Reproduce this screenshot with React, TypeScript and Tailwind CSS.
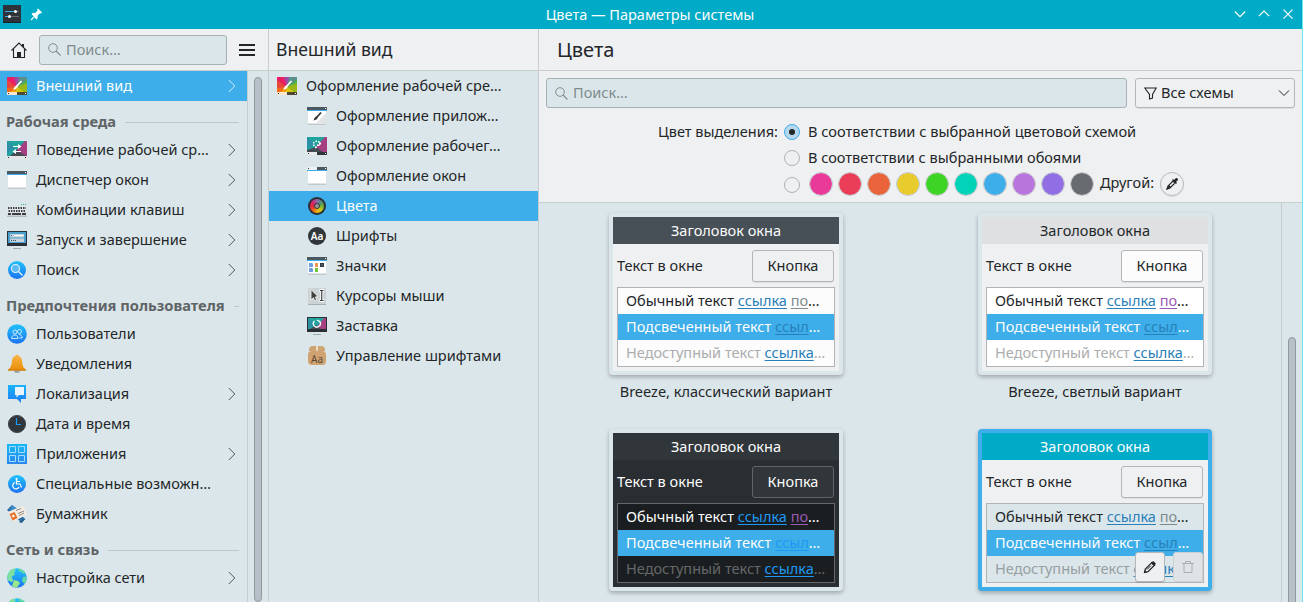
import React from "react";

type IconProps = { className?: string };

const Svg = ({ w = 20, h = 20, children }: { w?: number; h?: number; children: React.ReactNode }) => (
  <svg width={w} height={h} viewBox={`0 0 ${w} ${h}`} fill="none" className="block shrink-0">
    {children}
  </svg>
);

const Wheel = () => (
  <Svg>
    <path d="M0 1h20v18H0z" fill="#e8453c" />
    <path d="M10 11L0 4V1h8z" fill="#e91e63" />
    <path d="M10 11L7 1h6z" fill="#a04aa8" />
    <path d="M10 11L12 1h8v4z" fill="#5b8f8e" />
    <path d="M10 11L20 3v6z" fill="#4caf50" />
    <path d="M10 11l10-4v9H10z" fill="#9ab81a" />
    <path d="M10 11l7 5H8z" fill="#d9c60a" />
    <path d="M10 11l-2 5H2z" fill="#f5a00c" />
    <path d="M10 11l-7 5H0v-4z" fill="#f4681c" />
    <path d="M0 16h10v3H0z" fill="#fbe6cf" />
    <path d="M10 16h10v3H10z" fill="#4d4a33" />
    <path d="M1 17h1v1H1z" fill="#222" />
    <path d="M18 17h1v1h-1z" fill="#fff" />
    <path d="M14.500 5l-4.500 5" stroke="#fff" strokeWidth="1.800" />
    <path d="M9.500 9l1.500 1.500-2 2.500-3 .5 1.500-2.500z" fill="#fff" />
  </Svg>
);

const Behaviour = () => (
  <Svg>
    <path d="M0 1h20v18H0z" fill="#a53f82" />
    <path d="M0 1h18L4 16H0z" fill="#20a39c" />
    <path d="M0 1l8 7-8 5z" fill="#2b8fa6" />
    <path d="M10 10l9 6H3z" fill="#454b53" />
    <path d="M0 16h20v3H0z" fill="#e4e6e7" />
    <path d="M1 17h1v1H1zM18 17h1v1h-1z" fill="#222" />
    <path d="M6 6.500h5M9 11.500h5" stroke="#fff" strokeWidth="1.200" />
    <path d="M11 4l3.500 2.500L11 9zM9 9l-3.500 2.500L9 14z" fill="#fff" />
  </Svg>
);

const WindowIcon = ({ children, light }: { children?: React.ReactNode; light?: boolean }) => (
  <Svg>
    <path d="M1 4h18v14.500H1z" fill="#fff" />
    <path d="M1 17.500h18V19H1z" fill="#c3c8cb" />
    <path d="M0 1h20v3H0z" fill="#4b5861" />
    {light && <path d="M0 1h10v3H0z" fill="#eef0f1" />}
    {light && <path d="M1 2h1v1H1z" fill="#31363b" />}
    <path d="M0 4h20v1H0z" fill="#3daee9" />
    <path d="M18 2h1v1h-1z" fill="#fff" />
    {children}
  </Svg>
);

const Keyboard = () => (
  <Svg>
    <path d="M0 6h20v10H0z" fill="#e2e5e6" />
    <path d="M0 15.500h20V17H0z" fill="#b4bbbe" />
    <path d="M1 8h18M1.500 11h17" stroke="#3a4247" strokeWidth="2" strokeDasharray="1.500 1" />
    <path d="M1 14h3M5 14h9M15 14h4" stroke="#3a4247" strokeWidth="1.800" />
    <path d="M14 4.500h1M16 4.500h1M18 4.500h1" stroke="#2fb67c" />
  </Svg>
);

const Monitor = () => (
  <Svg>
    <path d="M0 1h20v15H0z" fill="#2b3036" />
    <path d="M1 2h18v11H1z" fill="#4aa0cd" />
    <path d="M3 4h14v3.500H3zM3 8.500h14V12H3z" fill="#c9d3da" />
    <path d="M7 5.500h9" stroke="#fff" />
    <path d="M4 5.500h1M4 10.500h1M6 10.500h1M8 10.500h1" stroke="#34495a" />
    <path d="M6 18.500h8" stroke="#a2aaae" />
  </Svg>
);

const Disc = ({ r = 9, children }: { r?: number; children: React.ReactNode }) => (
  <Svg>
    <defs>
      <linearGradient id="discBlue" x1="0" y1="0" x2="0" y2="1">
        <stop stopColor="#1fc2fb" />
        <stop offset="1" stopColor="#1d74f1" />
      </linearGradient>
    </defs>
    <circle cx="10" cy="10" r={r} fill="url(#discBlue)" />
    {children}
  </Svg>
);

const SearchDisc = () => (
  <Disc>
    <circle cx="8.500" cy="8.500" r="4" stroke="#e5f4fd" strokeWidth="1.100" fill="#5bb9f6" />
    <path d="M11.500 11.500l4 4" stroke="#e5f4fd" strokeWidth="1.300" />
  </Disc>
);

const Users = () => (
  <Disc r={9.8}>
    <g stroke="#d9eefc" strokeWidth=".9">
      <circle cx="8" cy="8" r="2" />
      <circle cx="12.500" cy="7.500" r="2" />
      <path d="M4.500 14.500c.3-2.500 1.500-3.500 3.500-3.500s2.800 1.200 3 3.500zM12 10.500c2 0 3 1.300 3.200 3.500h-3" />
    </g>
  </Disc>
);

const Bell = () => (
  <Svg>
    <defs>
      <linearGradient id="bellGold" x1="0" y1="0" x2="0" y2="1">
        <stop stopColor="#f9b54a" />
        <stop offset="1" stopColor="#ea8d05" />
      </linearGradient>
    </defs>
    <path d="M7 16.500h6a3 2.500 0 0 1-6 0z" fill="#9aa1a5" />
    <path d="M9 1.500a1 1 0 0 1 2 0C14 2.500 15 5 15.200 8c.2 3.500.8 5.500 3.600 7.500v1H1.200v-1C4 13.500 4.600 11.500 4.800 8 5 5 6 2.500 9 1.500z" fill="url(#bellGold)" />
    <path d="M1 15.500h18v1H1z" fill="#c67a0d" />
  </Svg>
);

const Locale = () => (
  <Svg>
    <defs>
      <linearGradient id="localeBlue" x1="0" y1="0" x2="0" y2="1">
        <stop stopColor="#1ab4fa" />
        <stop offset="1" stopColor="#1f7cf3" />
      </linearGradient>
    </defs>
    <path d="M1 1h18v14h-5v4l-4-4H1z" fill="url(#localeBlue)" />
    <path d="M8 3h9v8h-5l-2.500 2.500V11H8z" fill="#e8f5fe" />
  </Svg>
);

const Clock = () => (
  <Svg>
    <circle cx="10" cy="10" r="8.600" fill="#31363b" stroke="#45494d" />
    <path d="M9.500 4v6.500H14" stroke="#1d99f3" strokeWidth="1.200" />
  </Svg>
);

const Apps = () => (
  <Svg>
    <defs>
      <linearGradient id="appsBlue" x1="0" y1="0" x2="0" y2="1">
        <stop stopColor="#16b9f8" />
        <stop offset="1" stopColor="#2b86ec" />
      </linearGradient>
    </defs>
    <path d="M0 0h20v20H0z" fill="url(#appsBlue)" />
    <path d="M2.500 2.500h6v6h-6zM11.500 2.500h6v6h-6zM2.500 11.500h6v6h-6zM11.500 11.500h6v6h-6z" stroke="#a5dcfc" />
  </Svg>
);

const Access = () => (
  <Disc>
    <g stroke="#fff" strokeWidth="1.200">
      <path d="M9.500 5v5h3.500l1.500 3.500M9.500 7.500H13" />
      <path d="M8 8.500a3.300 3.300 0 1 0 4 4.500" />
    </g>
    <circle cx="9.500" cy="4.800" r="1" fill="#fff" />
  </Disc>
);

const Wallet = () => (
  <Svg>
    <path d="M5 1l13 14-3 4L0 6z" fill="#2c6ca5" />
    <path d="M5 1l6 4-9 4z" fill="#3e8ac6" />
    <path d="M1 8L16 1.500l4 9-14 7.500z" fill="#f1ece3" />
    <path d="M2.500 10l5-2 3 6-5 2.500z" fill="#e8732b" />
    <circle cx="6.300" cy="12" r="1.200" fill="#fff" />
    <path d="M9 6.500l5-2M11 9.500l6-2.500M12 11.500l5-2.500" stroke="#77716c" strokeWidth=".8" />
    <path d="M14 19l5-4.500-4 1.500-3 2z" fill="#2a5c8c" />
  </Svg>
);

const Globe = () => (
  <Disc r={9.8}>
    <path d="M1 6C2 3 4 1 6.500.8L9 2 7 4.500 8 6.500 4.500 9 6.500 12.500 4.500 14 1 12.500C0 10 0 8 1 6z" fill="#7ee0a0" />
    <path d="M12 .5c3 .5 5.500 2.500 6.500 5L16 5.500 14.500 4 11.500 3zM16 9l3.500-.5c.3 3-.5 5.500-2 7.500l-2.500-3z" fill="#63d9a6" />
    <path d="M7 12l4 1 2 2-3 4.500C8 19.500 6 18.500 5 18l1-3z" fill="#9be888" />
  </Disc>
);

const AppStyle = () => (
  <WindowIcon>
    <path d="M9 17.500L19 7v10.500z" fill="#e2e5e6" />
    <path d="M14 6.500l-4 4.500" stroke="#31363b" strokeWidth="1.800" />
    <path d="M9.500 10l1.500 1.500-1.500 2-3 1 1-2.500z" fill="#31363b" />
  </WindowIcon>
);

const PlasmaStyle = () => (
  <Svg>
    <path d="M0 1h20v18H0z" fill="#a53f82" />
    <path d="M0 1h18L4 16H0z" fill="#20a39c" />
    <path d="M0 1l8 7-8 5z" fill="#2b8fa6" />
    <path d="M9 11l7 5H0v-2z" fill="#454b53" />
    <path d="M0 16h10v3H0z" fill="#e9ebec" />
    <path d="M10 16h10v3H10z" fill="#31363b" />
    <path d="M1 17h1v1H1z" fill="#222" />
    <path d="M18 17h1v1h-1z" fill="#fff" />
    <path d="M6 6h1.500v1.500H6zM8.500 4.500H10V6H8.500zM6 8.500h1.500V10H6zM8 10.500h1.800v1.800H8z" fill="#fff" />
    <path d="M11 5h1.500v1.500H14v2h-1.500V10H10V8.500h2v-2h-1z" fill="#fff" />
  </Svg>
);

const ColorsIcon = () => (
  <span className="relative block size-5 shrink-0">
    <span className="absolute inset-px rounded-full bg-[#2b3036]" />
    <span className="absolute inset-[3px] rounded-full bg-[conic-gradient(#8a6aa5,#4f8e84,#6fb032,#c8c81c,#eeb10a,#ee5a1e,#e8243f,#d22774,#8a6aa5)]" />
    <span className="absolute top-[7px] left-[7px] size-1.5 rounded-full border-[1.5px] border-[#2b3036] bg-[#999]" />
  </span>
);

const Fonts = () => (
  <span className="flex size-5 shrink-0 items-center justify-center">
    <span className="flex size-[18px] items-center justify-center rounded-full bg-[#31363b] pb-px text-[10px] leading-none font-semibold text-white">
      Aa
    </span>
  </span>
);

const IconsIcon = () => (
  <WindowIcon>
    <path d="M2 7h3l1 1v3H2zM2 12h3l1 1v3H2z" fill="#6fa0dc" />
    <path d="M8 7h3v4H8z" fill="#f39350" />
    <path d="M8 12h3v4H8z" fill="#72c437" />
    <path d="M13 7h4v4h-4z" fill="#31363b" />
    <path d="M14.500 8.500h1v1h-1z" fill="#a9c6e8" />
  </WindowIcon>
);

const Cursors = () => (
  <Svg>
    <rect x="1" y="2" width="18" height="17" rx="1" fill="#cdd2d4" />
    <path d="M1 18h18v1H1z" fill="#a9b0b3" />
    <path d="M4 3.500l7 7-2.500.500 1 3-2 .8-1-3L4 14z" fill="#43423e" stroke="#fff" strokeWidth=".8" />
    <path d="M12.500 4.500h4.500M14.750 4.500v10M12.500 14.500h4.500" stroke="#fff" strokeWidth="2.800" />
    <path d="M13 4.500h3.500M14.750 4.500v10M13 14.500h3.500" stroke="#31363b" strokeWidth="1.100" />
  </Svg>
);

const Saver = () => (
  <Svg>
    <path d="M0 1h20v15H0z" fill="#2b3036" />
    <path d="M1 2h18v11H1z" fill="#a53f82" />
    <path d="M1 2h16L8 13H1z" fill="#22a49e" />
    <path d="M1 2l7 6-7 5z" fill="#2b8fa6" />
    <path d="M9 9l5 4H3z" fill="#444d56" />
    <path d="M7.500 5a3.500 3.500 0 1 0 5.200.5L10 4" stroke="#fff" strokeWidth="1.300" />
    <path d="M6 18.500h8" stroke="#a2aaae" />
  </Svg>
);

const FontBox = () => (
  <span className="flex h-5 w-5 shrink-0 flex-col items-center">
    <span className="h-[5px] w-4 rounded-t-sm bg-[linear-gradient(90deg,#cda472_42%,#ecd9bf_42%,#ecd9bf_58%,#cda472_58%)]" />
    <span className="flex h-[14px] w-[18px] items-end justify-center rounded-sm bg-[#d0a272] text-[10px] leading-[12px] text-[#5a4936]">
      Aa
    </span>
  </span>
);

type Item = { label: string; icon: () => React.ReactElement; more?: boolean; active?: boolean };

const groups: { title?: string; items: Item[] }[] = [
  { items: [{ label: "Внешний вид", icon: Wheel, more: true, active: true }] },
  {
    title: "Рабочая среда",
    items: [
      { label: "Поведение рабочей ср…", icon: Behaviour, more: true },
      { label: "Диспетчер окон", icon: () => <WindowIcon />, more: true },
      { label: "Комбинации клавиш", icon: Keyboard, more: true },
      { label: "Запуск и завершение", icon: Monitor, more: true },
      { label: "Поиск", icon: SearchDisc, more: true },
    ],
  },
  {
    title: "Предпочтения пользователя",
    items: [
      { label: "Пользователи", icon: Users },
      { label: "Уведомления", icon: Bell },
      { label: "Локализация", icon: Locale, more: true },
      { label: "Дата и время", icon: Clock },
      { label: "Приложения", icon: Apps, more: true },
      { label: "Специальные возможн…", icon: Access },
      { label: "Бумажник", icon: Wallet },
    ],
  },
  {
    title: "Сеть и связь",
    items: [
      { label: "Настройка сети", icon: Globe, more: true },
      { label: "", icon: Globe },
    ],
  },
];

const pages: Item[] = [
  { label: "Оформление прилож…", icon: AppStyle },
  { label: "Оформление рабочег…", icon: PlasmaStyle },
  { label: "Оформление окон", icon: () => <WindowIcon light /> },
  { label: "Цвета", icon: ColorsIcon, active: true },
  { label: "Шрифты", icon: Fonts },
  { label: "Значки", icon: IconsIcon },
  { label: "Курсоры мыши", icon: Cursors },
  { label: "Заставка", icon: Saver },
  { label: "Управление шрифтами", icon: FontBox },
];

const swatches = [
  "bg-[#e93a9a]",
  "bg-[#e93d58]",
  "bg-[#e9643a]",
  "bg-[#e8cb2d]",
  "bg-[#3dd425]",
  "bg-[#00d3b8]",
  "bg-[#3daee9]",
  "bg-[#b875dc]",
  "bg-[#926ee4]",
  "bg-[#686b6f]",
];

type Scheme = {
  name?: string;
  frame: string;
  title: string;
  body: string;
  button: string;
  list: string;
  disabled: string;
  link: string;
  visited: string;
  selLink: string;
  editable?: boolean;
};

const schemes: Scheme[] = [
  {
    name: "Breeze, классический вариант",
    frame: "bg-[#dbe6ea]",
    title: "bg-[#475057] text-[#fcfcfc]",
    body: "bg-[#eff0f1] text-[#232629]",
    button: "bg-[#eff0f1] border-[#b4b7b9]",
    list: "bg-[#fcfcfc] border-[#b1b4b6]",
    disabled: "text-[#abadae]",
    link: "text-[#2980b9]",
    visited: "text-[#7f8c8d]",
    selLink: "text-[#2980b9]",
  },
  {
    name: "Breeze, светлый вариант",
    frame: "bg-[#dbe6ea]",
    title: "bg-[#dee0e2] text-[#232629]",
    body: "bg-[#eff0f1] text-[#232629]",
    button: "bg-[#fcfcfc] border-[#b4b7b9]",
    list: "bg-[#fff] border-[#b1b4b6]",
    disabled: "text-[#abadae]",
    link: "text-[#2980b9]",
    visited: "text-[#9b59b6]",
    selLink: "text-[#2980b9]",
  },
  {
    frame: "bg-[#dbe6ea]",
    title: "bg-[#31363b] text-[#fcfcfc]",
    body: "bg-[#2a2e32] text-[#fcfcfc]",
    button: "bg-[#31363b] border-[#616569]",
    list: "bg-[#1b1e20] border-[#65686a]",
    disabled: "text-[#65686a]",
    link: "text-[#1d99f3]",
    visited: "text-[#9b59b6]",
    selLink: "text-[#1d99f3]",
  },
  {
    frame: "bg-[#3daee9]",
    title: "bg-[#00abc7] text-[#fcfcfc]",
    body: "bg-[#eff0f1] text-[#232629]",
    button: "bg-[#eff0f1] border-[#b4b7b9]",
    list: "bg-[#dbe6ea] border-[#b1b4b6]",
    disabled: "text-[#979ea1]",
    link: "text-[#2980b9]",
    visited: "text-[#7f8c8d]",
    selLink: "text-[#2980b9]",
    editable: true,
  },
];

const Chevron = ({ className = "" }: IconProps) => (
  <svg width="8" height="14" viewBox="0 0 8 14" fill="none" className={`shrink-0 ${className}`}>
    <path d="M.8 1l6 6-6 6" stroke="currentColor" />
  </svg>
);

const SearchField = ({ className = "" }: IconProps) => (
  <div className={`flex h-[30px] items-center gap-[5px] rounded-[3px] border border-[#a6b1b4] bg-[#dbe6ea] pl-2 text-[#7f8c8d] ${className}`}>
    <svg width="13" height="13" viewBox="0 0 13 13" fill="none" className="shrink-0">
      <circle cx="5" cy="5" r="4.300" stroke="currentColor" />
      <path d="M8 8l4.500 4.500" stroke="currentColor" strokeWidth="1.100" />
    </svg>
    <span className="pb-0.5">Поиск…</span>
  </div>
);

const SidebarRow = ({ item }: { item: Item }) => {
  const Icon = item.icon;
  return (
    <div className={`flex h-[30px] shrink-0 items-center pr-[11px] pl-[7px] ${item.active ? "bg-[#3daee9] text-[#fcfcfc]" : ""}`}>
      <Icon />
      <span className="ml-[9px] flex-1 pb-0.5 whitespace-nowrap">{item.label}</span>
      {item.more && <Chevron className={item.active ? "text-[#d5edf9]" : "text-[#50565a]"} />}
    </div>
  );
};

const Radio = ({ checked }: { checked?: boolean }) => (
  <span
    className={`flex size-4 shrink-0 items-center justify-center rounded-full border ${
      checked ? "border-[#3daee9] bg-[#b5d9ec]" : "border-[#b0b3b5] bg-[#eff0f1]"
    }`}
  >
    {checked && <span className="size-1.5 rounded-full bg-[#232629]" />}
  </span>
);

const Link = ({ color, children }: { color: string; children: React.ReactNode }) => (
  <span className={`underline decoration-1 underline-offset-2 ${color}`}>{children}</span>
);

const SchemeCard = ({ s }: { s: Scheme }) => (
  <div className="flex h-[216px] w-[234px] flex-col items-center">
    <div className={`relative h-[162px] w-full rounded-[4px] p-1 shadow-[0_2px_4px_rgba(0,0,0,0.28)] ${s.frame}`}>
      <div className={`flex h-[154px] flex-col ${s.body}`}>
        <div className={`flex h-[27px] items-center justify-center pb-0.5 ${s.title}`}>Заголовок окна</div>
        <div className="flex h-11 items-center justify-between pr-[5px] pl-1">
          <span className="pb-0.5">Текст в окне</span>
          <span className={`flex h-8 w-[82px] items-center justify-center rounded-[3px] border pb-0.5 shadow-[0_1px_0_rgba(0,0,0,0.08)] ${s.button}`}>
            Кнопка
          </span>
        </div>
        <div className={`mx-1 -mt-px h-20 border whitespace-nowrap ${s.list}`}>
          <div className="h-[26px] pl-2 leading-6">
            Обычный текст <Link color={s.link}>ссылка</Link> <Link color={s.visited}>по</Link>…
          </div>
          <div className="h-[26px] bg-[#3daee9] pl-2 leading-6 text-[#fcfcfc]">
            Подсвеченный текст <Link color={s.selLink}>ссыл</Link>…
          </div>
          <div className={`h-[26px] pl-2 leading-6 ${s.disabled}`}>
            Недоступный текст <Link color={s.link}>ссылка</Link>…
          </div>
        </div>
      </div>
      {s.editable && (
        <div className="absolute right-[9px] bottom-[9px] flex gap-2">
          <span className="flex h-[30px] w-[30px] items-center justify-center rounded-[3px] border border-[#b4b7b9] bg-[#eff0f1] shadow-[0_1px_0_rgba(0,0,0,0.12)]">
            <svg width="14" height="14" viewBox="0 0 14 14" fill="none">
              <path d="M1.500 12.500l.8-3.500L9 2.300 11.700 5 5 11.700z" stroke="#232629" strokeWidth="1.200" />
              <path d="M8 3.300L10.300 1 13 3.700 10.700 6z" fill="#232629" />
              <path d="M4 9.500l4-4" stroke="#232629" />
              <path d="M1 13l.8-3 2.200 2.200z" fill="#232629" />
            </svg>
          </span>
          <span className="flex h-[30px] w-[30px] items-center justify-center rounded-[3px] border border-[#cdd1d4] bg-[#dfe3e5]">
            <svg width="12" height="14" viewBox="0 0 12 14" fill="none">
              <path d="M0 3.500h12M3.500 3V1.500h5V3M2 4v8.500h8V4" stroke="#abafb1" />
            </svg>
          </span>
        </div>
      )}
    </div>
    {s.name && <div className="mt-1.5 leading-5 whitespace-nowrap">{s.name}</div>}
  </div>
);

const TitleBar = () => (
  <header className="relative flex h-[29px] shrink-0 items-center justify-center bg-[#00abc7] text-[#fcfcfc]">
    <div className="absolute top-[5px] left-[3px] flex items-center gap-2">
      <svg width="18" height="18" viewBox="0 0 18 18">
        <path d="M0 0h18v18H0z" fill="#2d3338" />
        <path d="M0 17h18v1H0z" fill="#1c2023" />
        <path d="M2 6.500h10M2 11.500h3" stroke="#3daee9" />
        <path d="M13 6.500h3M7 11.500h9" stroke="#626970" />
        <circle cx="12.500" cy="6.500" r="1.500" fill="#fff" />
        <circle cx="6.500" cy="11.500" r="1.500" fill="#fff" />
      </svg>
      <svg width="13" height="13" viewBox="0 0 13 13" className="ml-px">
        <path d="M8 .5L12 4.500 11 5.500 10 5.200 7.700 7.500 7.500 10.500 6.500 11.500 1.500 6 2.500 5 5.500 4.800 7.500 2.500 7.200 1.300z" fill="#fff" />
        <path d="M4 9L1 12" stroke="#fff" strokeWidth="1.100" />
      </svg>
    </div>
    <span className="pr-0.5 pb-0.5">Цвета — Параметры системы</span>
    <div className="absolute top-2 right-2 flex gap-3">
      <svg width="12" height="12" viewBox="0 0 12 12" fill="none" stroke="#fff" strokeWidth="1.100">
        <path d="M.8 3.500L6 8.700l5.200-5.200" />
      </svg>
      <svg width="12" height="12" viewBox="0 0 12 12" fill="none" stroke="#fff" strokeWidth="1.100">
        <path d="M.8 8.200L6 3l5.200 5.200" />
      </svg>
      <svg width="12" height="12" viewBox="0 0 12 12" fill="none" stroke="#fff" strokeWidth="1.100">
        <path d="M1.500 1.700l9 9M10.500 1.700l-9 9" />
      </svg>
    </div>
  </header>
);

export default function App() {
  return (
    <div className="flex h-[602px] w-[1303px] flex-col overflow-hidden border-r border-[#68e5f5] bg-[#eff0f1] font-['Noto_Sans',sans-serif] text-[14.53px] leading-5 text-[#232629]">
      <TitleBar />
      <div className="flex min-h-0 flex-1">
        <aside className="flex w-[269px] shrink-0 flex-col border-r border-[#c8cdd0]">
          <div className="flex h-[42px] shrink-0 items-center border-b border-[#c8cdd0] pl-[11px]">
            <svg width="16" height="16" viewBox="0 0 16 16" fill="none" className="mr-3 shrink-0">
              <path d="M.5 8.500L8 1l7.500 7.500M2.500 7v8.500h11V7" stroke="#232629" strokeWidth="1.100" />
              <path d="M11 2h2v4l-2-2zM6 10h4v6H6z" fill="#232629" />
            </svg>
            <SearchField className="w-[188px]" />
            <div className="ml-3 flex w-4 flex-col gap-[3px]">
              <span className="h-0.5 bg-[#232629]" />
              <span className="h-0.5 bg-[#232629]" />
              <span className="h-0.5 bg-[#232629]" />
            </div>
          </div>
          <div className="flex min-h-0 flex-1 bg-[#dbe6ea]">
            <nav className="flex w-[248px] flex-col overflow-hidden border-r border-[#c5cdd0]">
              {groups.map((g, i) => (
                <React.Fragment key={i}>
                  {g.title && (
                    <div className="flex h-[34px] shrink-0 items-center gap-[9px] pt-2 pr-2 pl-1.5 text-[14.7px] font-bold whitespace-nowrap text-[#5f6467]">
                      <span className="pb-0.5">{g.title}</span>
                      <span className="h-px flex-1 bg-[#bcc6cb]" />
                    </div>
                  )}
                  {g.items.map((it, j) => (
                    <SidebarRow key={j} item={it} />
                  ))}
                </React.Fragment>
              ))}
            </nav>
            <div className="mt-1.5 ml-1.5 h-[525px] w-2 rounded-full border border-[#8f999e] bg-[#b7c0c8]" />
          </div>
        </aside>

        <section className="flex w-[270px] shrink-0 flex-col border-r border-[#c8cdd0]">
          <h2 className="flex h-[42px] shrink-0 items-center border-b border-[#c8cdd0] pb-0.5 pl-[7px] text-[17.6px]">Внешний вид</h2>
          <div className="flex-1 bg-[#dbe6ea]">
            <div className="flex h-[30px] items-center gap-[9px] pl-2 whitespace-nowrap">
              <Wheel />
              <span className="pb-0.5">Оформление рабочей сре…</span>
            </div>
            {pages.map((p) => {
              const Icon = p.icon;
              return (
                <div
                  key={p.label}
                  className={`flex h-[30px] items-center pl-[38px] whitespace-nowrap ${p.active ? "bg-[#3daee9] text-[#fcfcfc]" : ""}`}
                >
                  <Icon />
                  <span className="ml-[9px] pb-0.5">{p.label}</span>
                </div>
              );
            })}
          </div>
        </section>

        <main className="flex min-w-0 flex-1 flex-col">
          <h1 className="flex h-[42px] shrink-0 items-center border-b border-[#c8cdd0] pl-[18px] text-[20px]">Цвета</h1>
          <div className="flex h-[132px] shrink-0 flex-col border-b border-[#c8cdd0] px-[7px] pt-[7px]">
            <div className="flex gap-2">
              <SearchField className="w-[581px]" />
              <div className="flex h-[30px] w-[160px] items-center rounded-[3px] border border-[#b4b7b9] pr-1 pl-2 shadow-[0_1px_0_rgba(0,0,0,0.08)]">
                <svg width="13" height="13" viewBox="0 0 13 13" fill="none" className="mr-1">
                  <path d="M.8 1h11.400L8.500 7.500v3.500l-3 1V7.500z" stroke="#232629" strokeWidth="1.100" />
                </svg>
                <span className="flex-1 pb-0.5">Все схемы</span>
                <svg width="12" height="8" viewBox="0 0 12 8" fill="none">
                  <path d="M1 1.500l5 5 5-5" stroke="#232629" />
                </svg>
              </div>
            </div>
            <div className="mt-[11px] flex h-[26px] items-center">
              <span className="w-[232px] pb-0.5 text-right">Цвет выделения:</span>
              <span className="ml-1.5 flex items-center gap-2 whitespace-nowrap">
                <Radio checked />
                <span className="pb-0.5 text-[14.6px]">В соответствии с выбранной цветовой схемой</span>
              </span>
            </div>
            <div className="flex h-[26px] items-center gap-2 pl-[238px] whitespace-nowrap">
              <Radio />
              <span className="pb-0.5">В соответствии с выбранными обоями</span>
            </div>
            <div className="flex h-[27px] items-center pl-[238px]">
              <Radio />
              <div className="-mt-px ml-[9px] flex gap-[5px]">
                {swatches.map((c) => (
                  <span key={c} className={`size-6 rounded-full border border-[#c3c6c8] bg-clip-padding ${c}`} />
                ))}
              </div>
              <span className="-mt-1.5 ml-1.5">Другой:</span>
              <span className="-mt-px ml-1.5 flex size-6 items-center justify-center rounded-full border border-[#b4b7b9] shadow-[0_1px_0_rgba(0,0,0,0.08)]">
                <svg width="14" height="14" viewBox="0 0 14 14" fill="none">
                  <path d="M2 12l1-3 5-5 2 2-5 5z" stroke="#232629" strokeWidth="1.200" />
                  <path d="M7 3l1-1 1 1 2-2 1.500.200.500 1.800-2 2 1 1-1 1z" fill="#232629" />
                  <path d="M1 13l3-5 2 2z" fill="#232629" />
                </svg>
              </span>
            </div>
          </div>
          <div className="flex min-h-0 flex-1 bg-[#dbe6ea]">
            <div className="grid w-[743px] grid-cols-[234px_234px] content-start gap-x-[135px] overflow-hidden border-r border-[#c5cdd0] pt-2.5 pl-[70px]">
              {schemes.map((s, i) => (
                <SchemeCard key={i} s={s} />
              ))}
            </div>
            <div className="mt-[134px] ml-1.5 h-[300px] w-2 rounded-full border border-[#8f999e] bg-[#b7c0c8]" />
          </div>
        </main>
      </div>
    </div>
  );
}
